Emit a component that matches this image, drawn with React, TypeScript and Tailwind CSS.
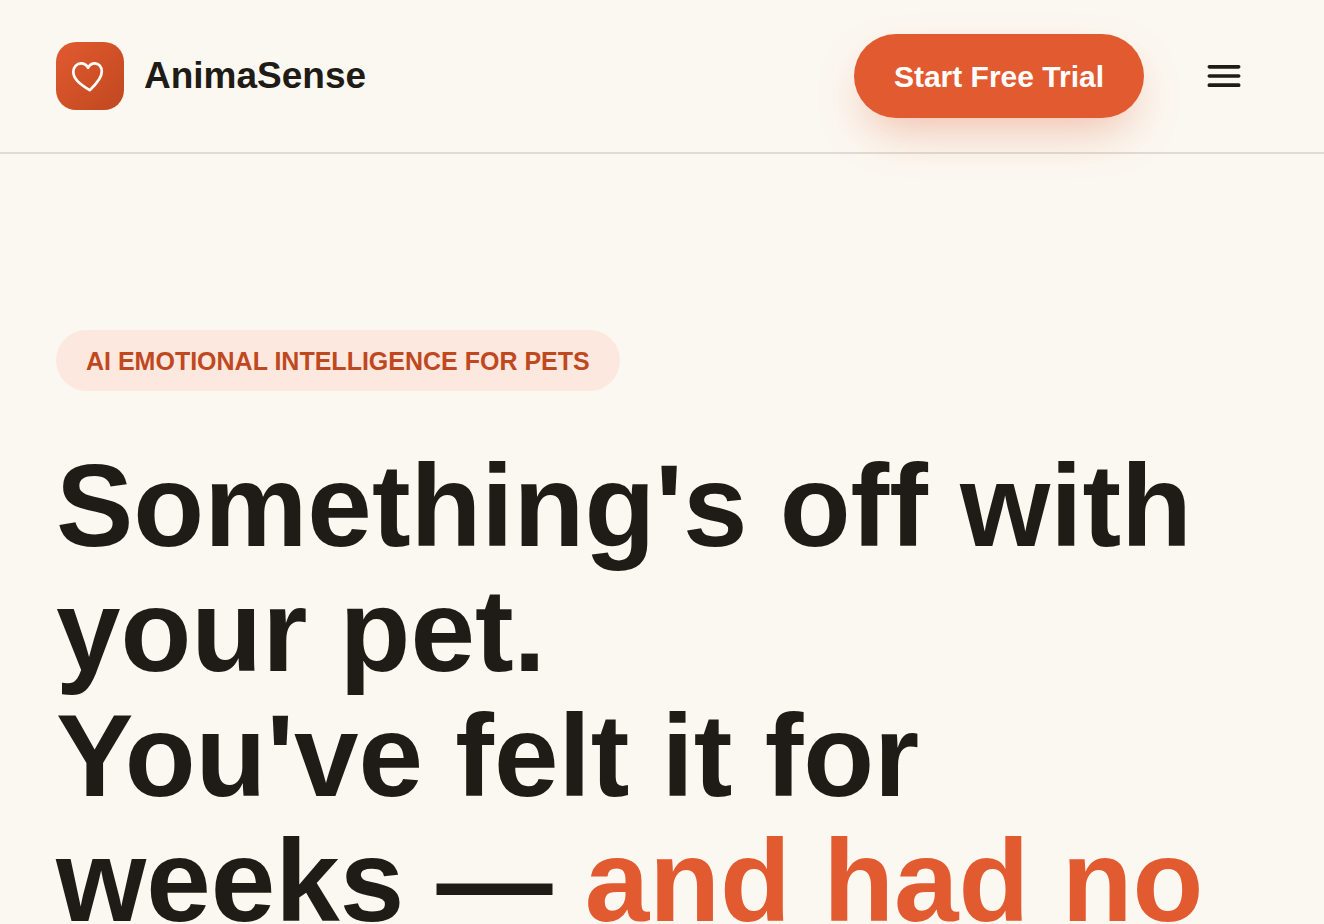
import React from "react";

/* logo: coração em contorno dentro do quadrado laranja */
function HeartLogo() {
  return (
    <span className="flex size-[68px] items-center justify-center rounded-[20px] bg-linear-to-br from-[#e25a30] to-[#c0481f]">
      <svg viewBox="0 0 40 40" className="size-10" fill="none" aria-hidden="true">
        <path
          d="M18.1 11.8C16.4 8.8 14.2 7.4 11.2 7.4C6.6 7.4 3.3 11 3.3 15.8C3.3 22.4 8.4 27.2 19.7 34.2C27.6 27 31.8 21.8 31.8 15.6C31.8 10.8 28.8 7.4 24.6 7.4C21.6 7.4 19.6 8.8 18.1 11.8Z"
          stroke="white"
          strokeWidth="2.7"
          strokeLinejoin="round"
        />
      </svg>
    </span>
  );
}

/* ícone do menu */
function MenuIcon() {
  return (
    <svg viewBox="0 0 24 24" className="size-11" fill="none" aria-hidden="true">
      <path d="M4 7h16M4 12h16M4 17h16" stroke="currentColor" strokeWidth="2" strokeLinecap="round" />
    </svg>
  );
}

function Header() {
  return (
    <header className="flex items-center justify-between border-b-2 border-[#e0dcd1] px-14 py-[34px]">
      <a href="#" className="flex items-center gap-5">
        <HeartLogo />
        <span className="text-[37px] leading-11 font-bold">AnimaSense</span>
      </a>

      <div className="flex items-center gap-9">
        <button
          type="button"
          className="h-21 rounded-full bg-[#e25a30] px-10 text-[30px] font-bold text-white shadow-[0_20px_48px_-12px_rgba(226,90,48,0.4)]"
        >
          Start Free Trial
        </button>
        <button type="button" aria-label="Open menu" className="flex h-21 w-22 items-center justify-center">
          <MenuIcon />
        </button>
      </div>
    </header>
  );
}

export default function App() {
  return (
    <div className="min-h-screen bg-[#fbf8f1] font-['Liberation_Sans',Arial,sans-serif] text-[#1f1b16]">
      <Header />

      <main className="px-14 pt-44">
        <p className="inline-flex items-center rounded-full bg-[#fde8df] px-[30px] pt-4 pb-[15px] text-[25px] leading-[30px] font-bold text-[#c0481f] uppercase">
          AI Emotional Intelligence for Pets
        </p>

        {/* título principal */}
        <h1 className="mt-[53px] text-[116px] leading-[125px] font-bold">
          Something's off with your pet.
          <br />
          You've felt it for weeks — <span className="text-[#e25a30]">and had no</span>
        </h1>
      </main>
    </div>
  );
}
